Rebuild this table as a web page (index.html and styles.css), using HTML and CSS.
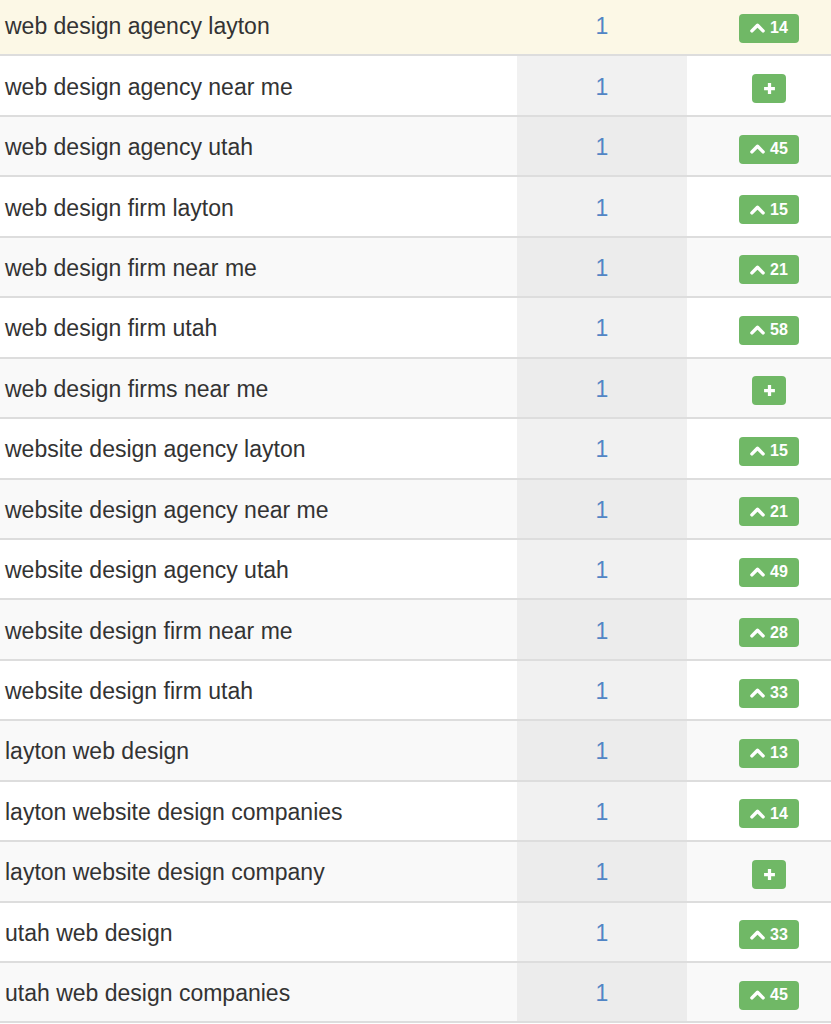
FILE: index.html
```html
<!DOCTYPE html>
<html>
<head>
<meta charset="utf-8">
<link rel="stylesheet" href="styles.css">
</head>
<body>
<div class="table">
  <div class="row highlight"><div class="kw">web design agency layton</div><div class="rank">1</div><div class="chg"><span class="badge"><svg class="up" viewBox="0 0 14 9"><path d="M1.8 7.2 L7 2 L12.2 7.2"/></svg>14</span></div></div>
  <div class="row"><div class="kw">web design agency near me</div><div class="rank">1</div><div class="chg"><span class="badge plus"><svg class="pl" viewBox="0 0 12 12"><path d="M6 1 V11 M1 6 H11"/></svg></span></div></div>
  <div class="row"><div class="kw">web design agency utah</div><div class="rank">1</div><div class="chg"><span class="badge"><svg class="up" viewBox="0 0 14 9"><path d="M1.8 7.2 L7 2 L12.2 7.2"/></svg>45</span></div></div>
  <div class="row"><div class="kw">web design firm layton</div><div class="rank">1</div><div class="chg"><span class="badge"><svg class="up" viewBox="0 0 14 9"><path d="M1.8 7.2 L7 2 L12.2 7.2"/></svg>15</span></div></div>
  <div class="row"><div class="kw">web design firm near me</div><div class="rank">1</div><div class="chg"><span class="badge"><svg class="up" viewBox="0 0 14 9"><path d="M1.8 7.2 L7 2 L12.2 7.2"/></svg>21</span></div></div>
  <div class="row"><div class="kw">web design firm utah</div><div class="rank">1</div><div class="chg"><span class="badge"><svg class="up" viewBox="0 0 14 9"><path d="M1.8 7.2 L7 2 L12.2 7.2"/></svg>58</span></div></div>
  <div class="row"><div class="kw">web design firms near me</div><div class="rank">1</div><div class="chg"><span class="badge plus"><svg class="pl" viewBox="0 0 12 12"><path d="M6 1 V11 M1 6 H11"/></svg></span></div></div>
  <div class="row"><div class="kw">website design agency layton</div><div class="rank">1</div><div class="chg"><span class="badge"><svg class="up" viewBox="0 0 14 9"><path d="M1.8 7.2 L7 2 L12.2 7.2"/></svg>15</span></div></div>
  <div class="row"><div class="kw">website design agency near me</div><div class="rank">1</div><div class="chg"><span class="badge"><svg class="up" viewBox="0 0 14 9"><path d="M1.8 7.2 L7 2 L12.2 7.2"/></svg>21</span></div></div>
  <div class="row"><div class="kw">website design agency utah</div><div class="rank">1</div><div class="chg"><span class="badge"><svg class="up" viewBox="0 0 14 9"><path d="M1.8 7.2 L7 2 L12.2 7.2"/></svg>49</span></div></div>
  <div class="row"><div class="kw">website design firm near me</div><div class="rank">1</div><div class="chg"><span class="badge"><svg class="up" viewBox="0 0 14 9"><path d="M1.8 7.2 L7 2 L12.2 7.2"/></svg>28</span></div></div>
  <div class="row"><div class="kw">website design firm utah</div><div class="rank">1</div><div class="chg"><span class="badge"><svg class="up" viewBox="0 0 14 9"><path d="M1.8 7.2 L7 2 L12.2 7.2"/></svg>33</span></div></div>
  <div class="row"><div class="kw">layton web design</div><div class="rank">1</div><div class="chg"><span class="badge"><svg class="up" viewBox="0 0 14 9"><path d="M1.8 7.2 L7 2 L12.2 7.2"/></svg>13</span></div></div>
  <div class="row"><div class="kw">layton website design companies</div><div class="rank">1</div><div class="chg"><span class="badge"><svg class="up" viewBox="0 0 14 9"><path d="M1.8 7.2 L7 2 L12.2 7.2"/></svg>14</span></div></div>
  <div class="row"><div class="kw">layton website design company</div><div class="rank">1</div><div class="chg"><span class="badge plus"><svg class="pl" viewBox="0 0 12 12"><path d="M6 1 V11 M1 6 H11"/></svg></span></div></div>
  <div class="row"><div class="kw">utah web design</div><div class="rank">1</div><div class="chg"><span class="badge"><svg class="up" viewBox="0 0 14 9"><path d="M1.8 7.2 L7 2 L12.2 7.2"/></svg>33</span></div></div>
  <div class="row"><div class="kw">utah web design companies</div><div class="rank">1</div><div class="chg"><span class="badge"><svg class="up" viewBox="0 0 14 9"><path d="M1.8 7.2 L7 2 L12.2 7.2"/></svg>45</span></div></div>
</div>
</body>
</html>
```

FILE: styles.css
```css
html, body {
  margin: 0;
  padding: 0;
  background: #ffffff;
  overflow: hidden;
}
body {
  font-family: "Liberation Sans", Arial, Helvetica, sans-serif;
  color: #333333;
}
.table {
  margin-top: -4px;
}
.row {
  display: grid;
  grid-template-columns: 517px 170px 1fr;
  height: 58.44px;
  border-bottom: 2px solid #dddddd;
  background: #ffffff;
}
.row:nth-child(odd) {
  background: #f9f9f9;
}
.row.highlight {
  background: #fcf8e6;
}
.kw {
  display: flex;
  align-items: center;
  padding-left: 5px;
  padding-top: 3px;
  font-size: 23px;
  color: #333333;
  white-space: nowrap;
}
.rank {
  display: flex;
  align-items: center;
  justify-content: center;
  padding-top: 3px;
  font-size: 23px;
  color: #5185c5;
  background: #f1f1f1;
}
.row:nth-child(odd) .rank {
  background: #ececec;
}
.row.highlight .rank {
  background: transparent;
}
.chg {
  display: flex;
  align-items: center;
  justify-content: center;
  padding-left: 20px;
  padding-top: 6px;
}
.badge {
  display: inline-flex;
  align-items: center;
  justify-content: center;
  gap: 5px;
  height: 29px;
  width: 60px;
  box-sizing: border-box;
  border-radius: 4px;
  background: #70b866;
  color: #ffffff;
  font-weight: bold;
  font-size: 16px;
}
.badge.plus {
  width: 34px;
}
.up {
  flex: none;
  width: 15px;
  height: 10px;
  fill: none;
  stroke: #ffffff;
  stroke-width: 3.2;
  stroke-linecap: round;
  stroke-linejoin: round;
}
.pl {
  flex: none;
  width: 13px;
  height: 13px;
  fill: none;
  stroke: #ffffff;
  stroke-width: 3;
}
```
